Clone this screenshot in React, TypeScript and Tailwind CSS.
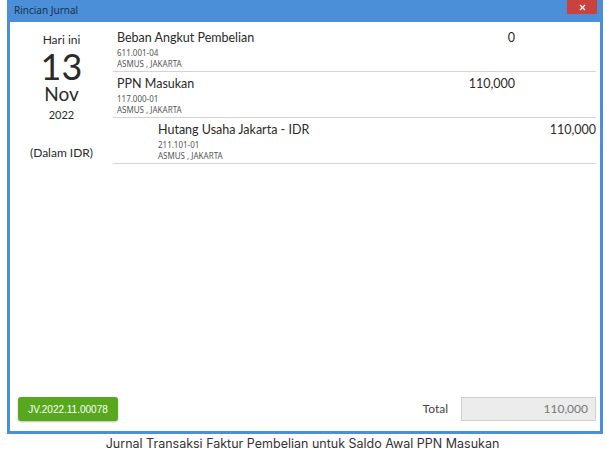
import React from "react";

type Entry = {
  name: string;
  code: string;
  branch: string;
  debit?: string;
  credit?: string;
};

const entries: Entry[] = [
  { name: "Beban Angkut Pembelian", code: "611.001-04", branch: "ASMUS , JAKARTA", debit: "0" },
  { name: "PPN Masukan", code: "117.000-01", branch: "ASMUS , JAKARTA", debit: "110,000" },
  { name: "Hutang Usaha Jakarta - IDR", code: "211.101-01", branch: "ASMUS , JAKARTA", credit: "110,000" },
];

function EntryRow({ entry }: { entry: Entry }) {
  const isCredit = entry.credit !== undefined;
  return (
    <div className="flex h-[46px] border-b border-[#d4d4d4]">
      <div className={isCredit ? "flex-1 pl-[45px] pt-[3px]" : "flex-1 pl-[4px] pt-[3px]"}>
        <div className="text-[12.5px] leading-[17px] text-[#2a2a2a]">{entry.name}</div>
        <div className="text-[8px] leading-[11px] text-[#555] mt-[1px] font-['Noto_Sans',sans-serif]">{entry.code}</div>
        <div className="text-[8px] leading-[11px] text-[#555] font-['Noto_Sans',sans-serif]">{entry.branch}</div>
      </div>
      <div className="w-[100px] text-right text-[12.5px] leading-[17px] pt-[3px] text-[#2a2a2a]">{entry.debit}</div>
      <div className="w-[81px] text-right text-[12.5px] leading-[17px] pt-[3px] text-[#2a2a2a]">{entry.credit}</div>
    </div>
  );
}

export default function App() {
  return (
    <div className="w-[605px] h-[454px] bg-white overflow-hidden font-['Lato','Noto_Sans',sans-serif]">
      <div className="ml-[7px] w-[596px] h-[434px] flex flex-col bg-[#4a8fd8]">
        {/* Title bar */}
        <div className="h-[22px] flex items-start justify-between relative">
          <span className="pl-[7px] text-[10px] leading-[20px] text-[#1b2f4a] font-['Noto_Sans',sans-serif]">Rincian Jurnal</span>
          <div className="absolute right-[6px] top-0 w-[30px] h-[14px] bg-[#c9423d] flex items-center justify-center">
            <svg width="7" height="7" viewBox="0 0 7 7">
              <path d="M1 1L6 6M6 1L1 6" stroke="#fff" strokeWidth="1.2" />
            </svg>
          </div>
        </div>

        {/* Body */}
        <div className="flex-1 mx-[3px] mb-[3px] bg-white flex flex-col">
          <div className="flex flex-1">
            <div className="w-[103px] flex flex-col items-center text-[#2a2a2a] pt-[10px]">
              <div className="text-[12px] leading-[16px]">Hari ini</div>
              <div className="text-[36px] leading-[36px]">13</div>
              <div className="text-[19px] leading-[20px]">Nov</div>
              <div className="text-[11px] leading-[14px] mt-[4px]">2022</div>
              <div className="text-[12px] leading-[14px] mt-[24px]">(Dalam IDR)</div>
            </div>
            <div className="flex-1 pr-[4px] pt-[4px]">
              {entries.map((e) => (
                <EntryRow key={e.code} entry={e} />
              ))}
            </div>
          </div>

          {/* Footer */}
          <div className="flex items-center pl-[8px] pr-[4px] pb-[10px]">
            <button className="h-[24px] w-[100px] rounded-[3px] bg-[#57a81c] text-white text-[10px] font-['Liberation_Sans',sans-serif] shadow-[0_1px_2px_rgba(0,0,0,0.25)]">
              JV.2022.11.00078
            </button>
            <div className="flex-1" />
            <span className="text-[12px] leading-[24px] text-[#444] mr-[13px]">Total</span>
            <div className="w-[135px] h-[24px] bg-[#ececec] border border-[#cfcfcf] text-right pr-[7px] text-[12px] leading-[22px] text-[#777]">
              110,000
            </div>
          </div>
        </div>
      </div>
      <div className="text-center text-[12.5px] leading-[18px] mt-[1px] text-[#333] font-['Inter',sans-serif]">
        Jurnal Transaksi Faktur Pembelian untuk Saldo Awal PPN Masukan
      </div>
    </div>
  );
}
